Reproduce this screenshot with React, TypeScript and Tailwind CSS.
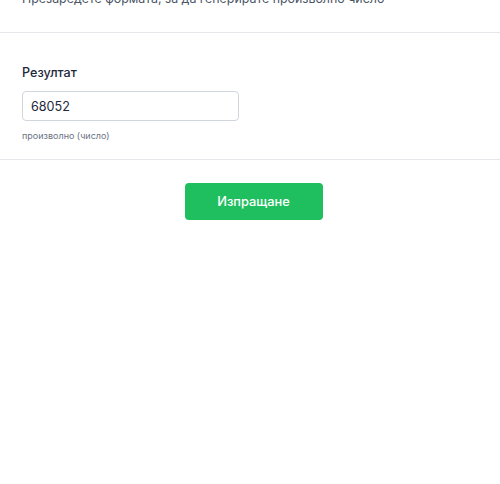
export default function App() {
  return (
    <div
      className="min-h-screen bg-white text-gray-800"
      style={{ fontFamily: "Inter, 'Noto Sans', sans-serif" }}
    >
      <div className="-mt-[11px] border-b border-gray-200 px-[22px] pb-[23px]">
        <p className="text-[12.4px] leading-5 text-gray-600">
          Презаредете формата, за да генерирате произволно число
        </p>
      </div>

      <div className="border-b border-gray-200 px-[22px] pt-[30px] pb-[17px]">
        <label className="block text-[12.6px] font-medium leading-5 text-gray-800">
          Резултат
        </label>
        <input
          type="text"
          defaultValue="68052"
          className="mt-[8px] block h-[30px] w-[217px] rounded-[4px] border border-gray-300 px-2 text-[12.6px] text-gray-800 outline-none"
        />
        <p className="mt-[9px] text-[9px] leading-[12px] text-gray-500">
          произволно (число)
        </p>
      </div>

      <div className="flex justify-center pt-[23px] pl-[7px]">
        <button
          type="button"
          className="h-[37px] w-[138px] rounded-[4px] bg-[#1fbf5f] text-[12.8px] font-medium text-white"
        >
          Изпращане
        </button>
      </div>
    </div>
  );
}
